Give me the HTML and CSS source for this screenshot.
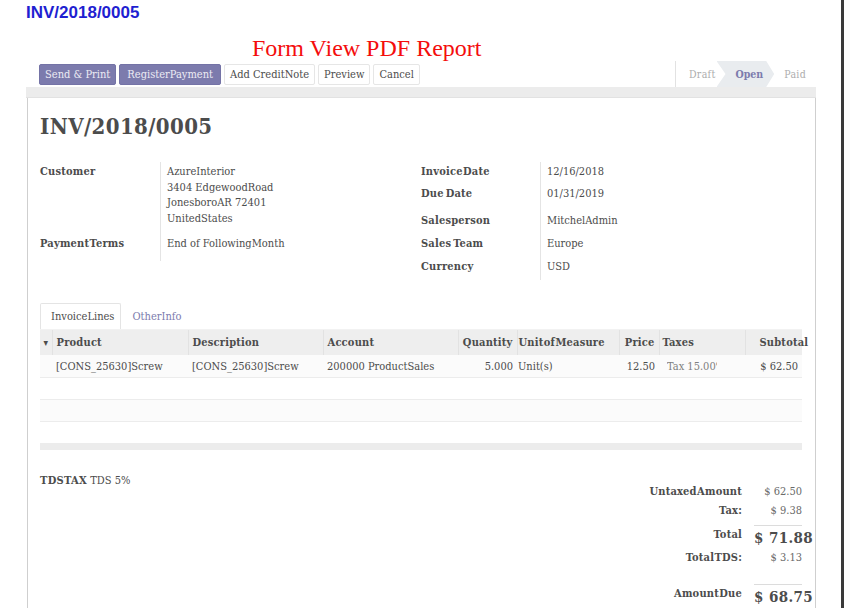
FILE: index.html
```html
<!DOCTYPE html>
<html>
<head>
<meta charset="utf-8">
<link rel="stylesheet" href="styles.css">
</head>
<body>
<div class="page">
  <div class="main">
    <h1 class="doc-id">INV/2018/0005</h1>
    <h2 class="report-title">Form View PDF Report</h2>
    <div class="form">
      <div class="statusbar">
        <div class="buttons">
          <span class="btn btn-primary">Send &amp; Print</span>
          <span class="btn btn-primary">Register<span class="sq"> </span>Payment</span>
          <span class="btn">Add Credit<span class="sq"> </span>Note</span>
          <span class="btn">Preview</span>
          <span class="btn">Cancel</span>
        </div>
        <div class="states">
          <span class="state state-draft">Draft</span>
          <span class="state state-active">Open</span>
          <span class="state state-paid">Paid</span>
        </div>
      </div>
      <div class="band"></div>
      <div class="sheet">
        <div class="sheet-title">INV/2018/0005</div>
        <div class="groups">
          <div class="group">
            <div class="lbl">Customer</div>
            <div class="val">Azure<span class="sq"> </span>Interior<br>3404 Edgewood<span class="sq"> </span>Road<br>Jonesboro<span class="sq"> </span>AR 72401<br>United<span class="sq"> </span>States</div>
            <div class="lbl lbl-terms">Payment<span class="sq"> </span>Terms</div>
            <div class="val val-terms">End of Following<span class="sq"> </span>Month</div>
          </div>
          <div class="group group-right">
            <div class="lbl r1">Invoice<span class="sq"> </span>Date</div><div class="val r1">12/16/2018</div>
            <div class="lbl r2">Due<span class="sq2"> </span>Date</div><div class="val r2">01/31/2019</div>
            <div class="lbl r3">Salesperson</div><div class="val r3">Mitchel<span class="sq"> </span>Admin</div>
            <div class="lbl r4">Sales<span class="sq2"> </span>Team</div><div class="val r4">Europe</div>
            <div class="lbl r5">Currency</div><div class="val r5">USD</div>
          </div>
        </div>
        <div class="tabs">
          <span class="tab tab-active">Invoice<span class="sq"> </span>Lines</span>
          <span class="tab">Other<span class="sq"> </span>Info</span>
        </div>
        <table class="lines">
          <colgroup>
            <col class="c-caret"><col class="c-prod"><col class="c-desc"><col class="c-acc"><col class="c-qty"><col class="c-uom"><col class="c-price"><col class="c-tax"><col class="c-sub">
          </colgroup>
          <thead>
            <tr>
              <th class="caret">&#9662;</th>
              <th>Product</th>
              <th>Description</th>
              <th>Account</th>
              <th class="num">Quantity</th>
              <th class="uom">Unit<span class="sq"> </span>of<span class="sq"> </span>Measure</th>
              <th class="num">Price</th>
              <th class="taxes">Taxes</th>
              <th class="sub">Subtotal</th>
            </tr>
          </thead>
          <tbody>
            <tr class="odd first">
              <td></td>
              <td>[CONS_25630]<span class="sq"> </span>Screw</td>
              <td>[CONS_25630]<span class="sq"> </span>Screw</td>
              <td>200000 Product<span class="sq"> </span>Sales</td>
              <td class="num">5.000</td>
              <td class="uom">Unit(s)</td>
              <td class="num">12.50</td>
              <td class="tax"><span class="tag">Tax 15.00%</span></td>
              <td class="num">$ 62.50</td>
            </tr>
            <tr><td colspan="9"></td></tr>
            <tr class="odd"><td colspan="9"></td></tr>
            <tr><td colspan="9"></td></tr>
          </tbody>
          <tfoot>
            <tr><td colspan="9"></td></tr>
          </tfoot>
        </table>
        <div class="bottom">
          <div class="tds"><b>TDSTAX</b> TDS 5%</div>
          <div class="totals">
            <div class="trow r-untaxed"><span class="tl">Untaxed<span class="sq"> </span>Amount</span><span class="tv">$ 62.50</span></div>
            <div class="trow r-tax"><span class="tl">Tax:</span><span class="tv">$ 9.38</span></div>
            <div class="trow r-total big"><span class="tl">Total</span><span class="tv tv-big">$ 71.88</span></div>
            <div class="trow r-tds"><span class="tl">Total<span class="sq"> </span>TDS:</span><span class="tv">$ 3.13</span></div>
            <div class="trow r-due big"><span class="tl">Amount<span class="sq"> </span>Due</span><span class="tv tv-big">$ 68.75</span></div>
          </div>
        </div>
      </div>
    </div>
  </div>
  <div class="edge"></div>
</div>
</body>
</html>
```

FILE: styles.css
```css
html, body {
  margin: 0;
  padding: 0;
  background: #fff;
}

.page {
  display: flex;
  height: 608px;
  overflow: hidden;
}

.main {
  flex: 1;
  min-width: 0;
  font-family: "DejaVu Serif", serif;
  font-stretch: condensed;
  font-size: 11px;
  color: #4c4c4c;
}

.edge {
  width: 3px;
  background: #3a3a3a;
}

.sq {
  word-spacing: -0.3em;
}

.sq2 {
  word-spacing: -0.15em;
}

.doc-id {
  margin: 3px 0 0 26px;
  font-family: "Liberation Sans", Arial, sans-serif;
  font-stretch: normal;
  font-size: 17px;
  line-height: 20px;
  font-weight: bold;
  color: #1f1fd1;
}

.report-title {
  margin: 12px 0 0 252px;
  font-family: "Liberation Serif", "Times New Roman", serif;
  font-stretch: normal;
  font-weight: normal;
  font-size: 24px;
  line-height: 26px;
  color: #f40d0d;
}

.form {
  margin: 0 25px 0 26px;
}

.statusbar {
  display: flex;
  justify-content: space-between;
  align-items: stretch;
  height: 26px;
}

.buttons {
  display: flex;
  align-items: center;
  gap: 3px;
  padding-left: 13px;
}

.btn {
  display: inline-flex;
  align-items: center;
  height: 19px;
  padding: 0 5px;
  border: 1px solid #e6e6e6;
  border-radius: 2px;
  background: #fff;
  color: #4c4c4c;
  white-space: nowrap;
}

.btn-primary {
  background: #7c7bad;
  border-color: #7473a6;
  color: #ecebf4;
  padding: 0 5px;
}

.btn-primary + .btn-primary {
  padding: 0 7px;
}

.states {
  display: flex;
  align-items: stretch;
  border-left: 1px solid #e2e2e2;
}

.state {
  display: flex;
  align-items: center;
  font-size: 10.5px;
  color: #adadad;
  letter-spacing: 0.3px;
}

.state-draft {
  padding: 0 1px 0 13px;
}

.state-active {
  padding: 0 11px 0 19px;
  background: #e9ecef;
  color: #7c7bad;
  font-weight: bold;
  letter-spacing: 0;
  clip-path: polygon(0 0, calc(100% - 8px) 0, 100% 50%, calc(100% - 8px) 100%, 0 100%, 9px 50%);
}

.state-paid {
  padding: 0 10px 0 10px;
}

.band {
  height: 10px;
  background: #ececec;
  border-bottom: 1px solid #e2e2e2;
}

.sheet {
  margin-left: 1px;
  border-left: 1px solid #cfcfcf;
  border-right: 1px solid #cfcfcf;
  padding: 15px 13px 0 12px;
  height: 520px;
  background: #fff;
}

.sheet-title {
  font-size: 22px;
  line-height: 26px;
  font-weight: bold;
  color: #4c4c4c;
  letter-spacing: 0.4px;
}

.groups {
  display: flex;
  margin-top: 23px;
}

.group {
  display: grid;
  grid-template-columns: 120px 1fr;
  width: 381px;
  align-content: start;
}

.group .lbl {
  font-weight: bold;
  color: #4c4c4c;
  padding-top: 2px;
  line-height: 15.5px;
  letter-spacing: 0.2px;
}

.group .val {
  border-left: 1px solid #e4e4e4;
  padding-left: 6px;
  padding-top: 2px;
  line-height: 15.5px;
}

.group .lbl-terms, .group .val-terms {
  padding-top: 10px;
  padding-bottom: 9px;
}

.group-right {
  grid-template-columns: 119px 1fr;
  width: 360px;
}

.group-right .lbl, .group-right .val {
  line-height: 15px;
}

.group-right .r1 { height: 20px; }
.group-right .r2 { height: 25px; }
.group-right .r3 { height: 21px; }
.group-right .r4 { height: 21px; }
.group-right .r5 { height: 21px; }

.tabs {
  display: flex;
  margin-top: 23px;
  border-bottom: 1px solid #f2f2f2;
  height: 26px;
}

.tab {
  display: flex;
  align-items: center;
  padding: 0 5px 0 10px;
  color: #7c7bad;
  border: 1px solid transparent;
  border-bottom: none;
}

.tab-active {
  color: #4c4c4c;
  border-color: #e4e4e4;
  background: #fff;
  border-radius: 2px 2px 0 0;
  padding-right: 6px;
  margin-right: 0;
}

.lines {
  width: 762px;
  border-collapse: collapse;
  table-layout: fixed;
}

.c-caret { width: 12px; }
.c-prod { width: 136px; }
.c-desc { width: 135px; }
.c-acc { width: 135px; }
.c-qty { width: 59px; }
.c-uom { width: 102px; }
.c-price { width: 40px; }
.c-tax { width: 86px; }
.c-sub { width: 57px; }

.lines th {
  height: 25px;
  padding: 0 4px;
  background: #eeeeee;
  border-left: 1px solid #e2e2e2;
  text-align: left;
  font-weight: bold;
  color: #4c4c4c;
  white-space: nowrap;
  overflow: visible;
  letter-spacing: 0.2px;
}

.lines th.caret {
  border-left: none;
  padding: 0;
  text-align: center;
  font-size: 10px;
}

.lines th.num, .lines td.num {
  text-align: right;
}

.lines th.uom, .lines td.uom {
  padding-left: 1px;
}

.lines th.taxes {
  padding-left: 3px;
}

.lines th.sub {
  padding: 0 0 0 14px;
}

.lines td {
  height: 21px;
  padding: 0 4px;
  border-bottom: 1px solid #ececec;
  white-space: nowrap;
  overflow: hidden;
}

.lines tr.first td {
  height: 22px;
}

.lines tr.odd td {
  background: #fbfbfb;
}

.lines td.tax {
  padding-left: 8px;
}

.tag {
  display: inline-block;
  vertical-align: middle;
  max-width: 50px;
  overflow: hidden;
  color: #808080;
  white-space: nowrap;
}

.lines tfoot td {
  height: 6px;
  padding: 0;
  background: #ececec;
  border: none;
}

.bottom {
  display: flex;
  justify-content: space-between;
  margin-top: 23px;
}

.tds {
  line-height: 15px;
}

.tds b {
  letter-spacing: 0.3px;
}

.totals {
  display: flex;
  flex-direction: column;
  margin-top: 11px;
}

.trow {
  display: flex;
  align-items: baseline;
  justify-content: flex-end;
  gap: 12px;
}

.trow.big {
  align-items: center;
}

.tl {
  font-weight: bold;
  text-align: right;
  color: #4c4c4c;
  line-height: 15px;
  letter-spacing: 0.2px;
}

.big .tl {
  margin-top: -2px;
}

.tv {
  width: 48px;
  text-align: right;
  color: #6a6a6a;
  line-height: 15px;
  white-space: nowrap;
}

.tv-big {
  font-size: 15px;
  font-weight: bold;
  color: #4c4c4c;
  text-align: left;
  border-top: 1px solid #dcdcdc;
  padding-top: 3px;
  line-height: 18px;
  letter-spacing: 0.4px;
}

.r-untaxed { height: 19px; }
.r-tax { height: 18.5px; }
.r-total { height: 28px; }
.r-tds { height: 33px; }
.r-due { height: 24px; }
```
